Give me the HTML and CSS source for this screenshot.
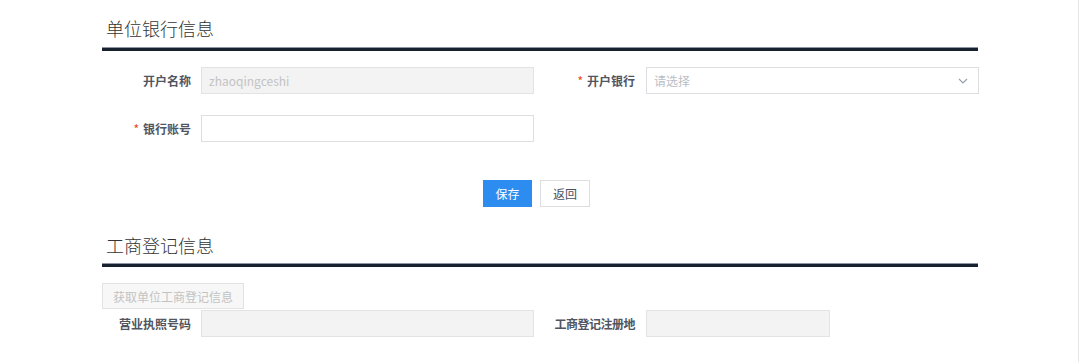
FILE: index.html
```html
<!DOCTYPE html>
<html lang="zh-CN">
<head>
<meta charset="utf-8">
<title>单位银行信息</title>
<link rel="stylesheet" href="styles.css">
</head>
<body>
<div class="page">
  <div class="content">
    <section class="section">
      <h2 class="section-title">单位银行信息</h2>
      <div class="form-row first">
        <div class="field">
          <label class="label">开户名称</label>
          <div class="input disabled wide">zhaoqingceshi</div>
        </div>
        <div class="field">
          <label class="label label-right"><span class="req">*</span>开户银行</label>
          <div class="input select wide">
            <span class="placeholder">请选择</span>
            <svg class="chev" width="10" height="6" viewBox="0 0 10 6"><path d="M1 1 L5 5 L9 1" fill="none" stroke="#9aa0a8" stroke-width="1.2"/></svg>
          </div>
        </div>
      </div>
      <div class="form-row second">
        <div class="field">
          <label class="label"><span class="req">*</span>银行账号</label>
          <div class="input wide"></div>
        </div>
      </div>
      <div class="actions">
        <button class="btn btn-primary">保存</button>
        <button class="btn btn-default">返回</button>
      </div>
    </section>
    <section class="section">
      <h2 class="section-title title-2">工商登记信息</h2>
      <button class="btn btn-disabled">获取单位工商登记信息</button>
      <div class="form-row third">
        <div class="field">
          <label class="label">营业执照号码</label>
          <div class="input disabled wide"></div>
        </div>
        <div class="field">
          <label class="label label-right label-tight">工商登记注册地</label>
          <div class="input disabled short"></div>
        </div>
      </div>
    </section>
  </div>
</div>
</body>
</html>
```
FILE: styles.css
```css
* { box-sizing: border-box; }
html, body { margin: 0; padding: 0; background: #fff; }
body {
  font-family: "Noto Sans CJK SC", "Noto Sans", "Liberation Sans", sans-serif;
  font-size: 12px;
  color: #495060;
}
.page {
  width: 1079px;
  height: 362px;
  border-right: 1px solid #e6e6e6;
  overflow: hidden;
}
.content {
  margin-left: 102px;
  width: 876px;
}
.section-title {
  margin: 0;
  padding: 16px 0 8px 4px;
  font-size: 18px;
  line-height: 24px;
  font-weight: 300;
  color: #333;
  border-bottom: 3px solid #18222f;
  box-shadow: 0 -1px 0 #8e959e inset;
}
.title-2 { padding-top: 26px; padding-bottom: 7px; }
.form-row { display: flex; }
.form-row.first { margin-top: 16px; }
.form-row.second { margin-top: 21px; }
.form-row.third { margin-top: 1px; }
.field { display: flex; align-items: center; }
.label {
  width: 99px;
  padding-right: 10px;
  text-align: right;
  font-weight: bold;
  color: #50555f;
  font-size: 12px;
  line-height: 16px;
}
.label-right { width: 112px; padding-right: 11px; }
.label-tight { letter-spacing: -0.5px; }
.req { color: #ed3f14; margin-right: 4px; font-weight: normal; }
.input {
  height: 27px;
  border: 1px solid #dddee1;
  background: #fff;
  padding: 0 7px;
  display: flex;
  align-items: center;
  font-size: 12px;
  color: #bbbec4;
}
.input.wide { width: 333px; }
.input.short { width: 184px; }
.input.disabled { background: #f3f3f3; border-color: #e3e3e3; color: #c3c3c3; }
.select { justify-content: space-between; padding-right: 10px; }
.placeholder { color: #bbbec4; }
.chev { display: block; }
.actions {
  display: flex;
  justify-content: center;
  gap: 8px;
  margin-top: 38px;
  padding-right: 7px;
}
.btn {
  font-family: inherit;
  font-size: 12px;
  height: 27px;
  padding: 0 12px;
  border: 1px solid transparent;
  background: #fff;
  cursor: pointer;
  line-height: 25px;
}
.btn-primary { background: #2d8cf0; border-color: #2d8cf0; color: #fff; width: 49px; padding: 0; }
.btn-default { border-color: #dddee1; color: #495060; width: 50px; padding: 0; }
.btn-disabled {
  display: block;
  margin-top: 16px;
  height: 26px;
  width: 142px;
  padding: 0;
  background: #f7f7f7;
  border-color: #e3e3e3;
  color: #c3c3c3;
}
```
